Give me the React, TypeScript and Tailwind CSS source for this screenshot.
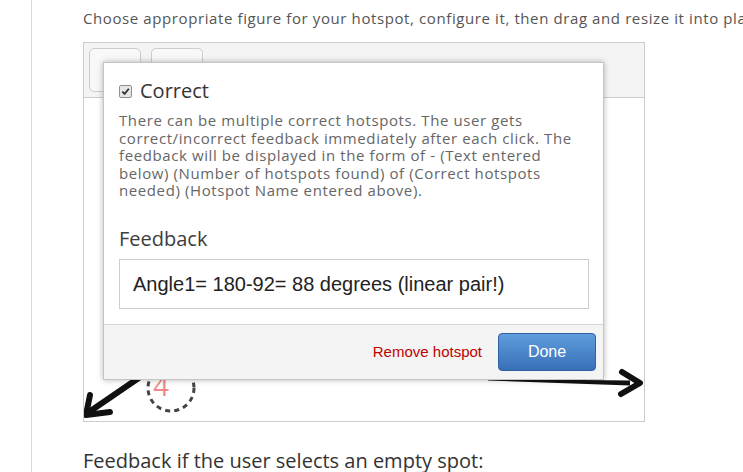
import type React from "react"

const HotspotCanvas: React.FC = () => {
  return (
    <div className="relative mt-[14px] h-[380px] w-[562px] border border-[#cccccc] bg-white">
      <div className="flex h-[55px] gap-[10px] border-b border-[#cccccc] bg-[#f4f4f4] px-[5px] pt-[5px]">
        <div className="h-[44px] w-[52px] rounded-[5px] border border-[#cccccc] bg-[#f8f8f8]"></div>
        <div className="h-[44px] w-[52px] rounded-[5px] border border-[#cccccc] bg-[#f8f8f8]"></div>
      </div>

      <svg className="pointer-events-none absolute inset-0" width="560" height="378" viewBox="0 0 560 378">
        <line x1="62" y1="330" x2="5" y2="369" stroke="#111" strokeWidth="6" strokeLinecap="round" />
        <path d="M6 352 L2 372 L26 369" fill="none" stroke="#111" strokeWidth="6" strokeLinejoin="round" strokeLinecap="round" />
        <polygon points="404,336 546,337.5 546,342.5 404,337.5" fill="#111" />
        <path d="M538 329 L556 340 L537 351" fill="none" stroke="#111" strokeWidth="6" strokeLinejoin="round" strokeLinecap="round" />
        <circle cx="87" cy="345" r="23" fill="none" stroke="#444" strokeWidth="3" strokeDasharray="5 4.2" />
      </svg>
      <span className="absolute left-[69px] top-[328px] font-['Open_Sans'] text-[28px] leading-[28px] text-[#f08a8a]">4</span>

      <div className="absolute left-[19px] top-[19px] flex h-[318px] w-[501px] flex-col border border-[#c4c4c4] bg-white shadow-[0_0_6px_rgba(0,0,0,0.28)]">
        <div className="flex-1 px-[15px] pt-[15px]">
          <label className="flex items-center gap-[8px]">
            <span className="flex h-[13px] w-[13px] items-center justify-center rounded-[2px] border border-[#8f8f8f] bg-[#e6e6e6]">
              <svg width="9" height="9" viewBox="0 0 9 9">
                <path d="M1.3 4.6 L3.6 6.9 L7.8 1.8" fill="none" stroke="#333" strokeWidth="1.8" />
              </svg>
            </span>
            <span className="text-[20px] leading-[26px] text-[#333333]">Correct</span>
          </label>
          <p className="mt-[8px] text-[15px] leading-[17.5px] tracking-[0.6px] text-[#666666]">
            There can be multiple correct hotspots. The user gets correct/incorrect feedback immediately after each click. The feedback will be displayed in the form of - (Text entered below) (Number of hotspots found) of (Correct hotspots needed) (Hotspot Name entered above).
          </p>
          <h4 className="mt-[25px] text-[20px] leading-[28px] text-[#3d3d3d]">Feedback</h4>
          <div className="mt-[6px] flex h-[50px] w-[470px] items-center border border-[#cccccc] bg-white pl-[13px] font-['Liberation_Sans'] text-[20px] text-[#222222]">
            Angle1= 180-92= 88 degrees (linear pair!)
          </div>
        </div>
        <div className="flex h-[55px] items-center justify-end gap-[16px] border-t border-[#d6d6d6] bg-[#f4f4f4] pr-[7px]">
          <span className="font-['Liberation_Sans'] text-[15px] text-[#c00000]">Remove hotspot</span>
          <button className="h-[38px] w-[98px] rounded-[4px] border border-[#2f62a3] bg-linear-to-b from-[#5f9ddc] to-[#3870b8] font-['Liberation_Sans'] text-[16px] text-white">
            Done
          </button>
        </div>
      </div>
    </div>
  )
}

const App: React.FC = () => {
  return (
    <div className="h-[472px] w-[743px] overflow-hidden bg-white font-['Open_Sans',sans-serif]">
      <div className="ml-[31px] h-full border-l border-[#d9d9d9] pl-[51px] pt-[8px]">
        <p className="whitespace-nowrap text-[15px] leading-[20px] tracking-[0.6px] text-[#555555]">
          Choose appropriate figure for your hotspot, configure it, then drag and resize it into place.
        </p>
        <HotspotCanvas />
        <h3 className="mt-[25px] text-[20px] leading-[28px] text-[#333333]">Feedback if the user selects an empty spot:</h3>
      </div>
    </div>
  )
}

export default App
